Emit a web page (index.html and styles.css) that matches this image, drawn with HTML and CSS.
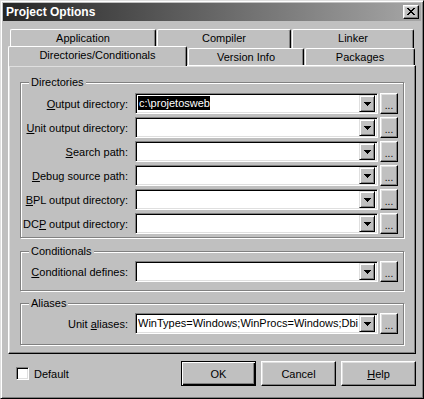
FILE: index.html
```html
<!DOCTYPE html>
<html lang="en">
<head>
    <meta charset="UTF-8">
    <title>Project Options</title>
    <link rel="stylesheet" href="styles.css">
</head>
<body>
    <div class="window">
        <div class="titlebar">
            <span class="title">Project Options</span>
            <button class="close-btn" type="button">
                <svg width="8" height="7" viewBox="0 0 8 7" shape-rendering="crispEdges">
                    <path d="M0 0h2v1H0zM6 0h2v1H6zM1 1h2v1H1zM5 1h2v1H5zM2 2h4v1H2zM3 3h2v1H3zM2 4h4v1H2zM1 5h2v1H1zM5 5h2v1H5zM0 6h2v1H0zM6 6h2v1H6z" fill="#000"/>
                </svg>
            </button>
        </div>

        <div class="tabs">
            <div class="tab-row tab-row-back">
                <div class="tab tab-application">Application</div>
                <div class="tab tab-compiler">Compiler</div>
                <div class="tab tab-linker">Linker</div>
            </div>
            <div class="tab-row tab-row-front">
                <div class="tab tab-selected tab-directories">Directories/Conditionals</div>
                <div class="tab tab-version">Version Info</div>
                <div class="tab tab-packages">Packages</div>
            </div>

            <div class="tab-page">
                <!-- Directories -->
                <div class="group group-directories">
                    <div class="group-title">Directories</div>
                    <div class="field-list">
                        <div class="field">
                            <label class="field-label"><u>O</u>utput directory:</label>
                            <div class="combo">
                                <span class="combo-text"><span class="selected-text">c:\projetosweb</span></span>
                                <span class="combo-arrow"><svg width="7" height="4" viewBox="0 0 7 4" shape-rendering="crispEdges"><path d="M0 0h7v1H0zM1 1h5v1H1zM2 2h3v1H2zM3 3h1v1H3z" fill="#000"/></svg></span>
                            </div>
                            <button class="ellipsis-btn" type="button">...</button>
                        </div>
                        <div class="field">
                            <label class="field-label"><u>U</u>nit output directory:</label>
                            <div class="combo">
                                <span class="combo-text"></span>
                                <span class="combo-arrow"><svg width="7" height="4" viewBox="0 0 7 4" shape-rendering="crispEdges"><path d="M0 0h7v1H0zM1 1h5v1H1zM2 2h3v1H2zM3 3h1v1H3z" fill="#000"/></svg></span>
                            </div>
                            <button class="ellipsis-btn" type="button">...</button>
                        </div>
                        <div class="field">
                            <label class="field-label"><u>S</u>earch path:</label>
                            <div class="combo">
                                <span class="combo-text"></span>
                                <span class="combo-arrow"><svg width="7" height="4" viewBox="0 0 7 4" shape-rendering="crispEdges"><path d="M0 0h7v1H0zM1 1h5v1H1zM2 2h3v1H2zM3 3h1v1H3z" fill="#000"/></svg></span>
                            </div>
                            <button class="ellipsis-btn" type="button">...</button>
                        </div>
                        <div class="field">
                            <label class="field-label"><u>D</u>ebug source path:</label>
                            <div class="combo">
                                <span class="combo-text"></span>
                                <span class="combo-arrow"><svg width="7" height="4" viewBox="0 0 7 4" shape-rendering="crispEdges"><path d="M0 0h7v1H0zM1 1h5v1H1zM2 2h3v1H2zM3 3h1v1H3z" fill="#000"/></svg></span>
                            </div>
                            <button class="ellipsis-btn" type="button">...</button>
                        </div>
                        <div class="field">
                            <label class="field-label"><u>B</u>PL output directory:</label>
                            <div class="combo">
                                <span class="combo-text"></span>
                                <span class="combo-arrow"><svg width="7" height="4" viewBox="0 0 7 4" shape-rendering="crispEdges"><path d="M0 0h7v1H0zM1 1h5v1H1zM2 2h3v1H2zM3 3h1v1H3z" fill="#000"/></svg></span>
                            </div>
                            <button class="ellipsis-btn" type="button">...</button>
                        </div>
                        <div class="field">
                            <label class="field-label">DC<u>P</u> output directory:</label>
                            <div class="combo">
                                <span class="combo-text"></span>
                                <span class="combo-arrow"><svg width="7" height="4" viewBox="0 0 7 4" shape-rendering="crispEdges"><path d="M0 0h7v1H0zM1 1h5v1H1zM2 2h3v1H2zM3 3h1v1H3z" fill="#000"/></svg></span>
                            </div>
                            <button class="ellipsis-btn" type="button">...</button>
                        </div>
                    </div>
                </div>

                <!-- Conditionals -->
                <div class="group group-conditionals">
                    <div class="group-title">Conditionals</div>
                    <div class="field-list">
                        <div class="field">
                            <label class="field-label"><u>C</u>onditional defines:</label>
                            <div class="combo">
                                <span class="combo-text"></span>
                                <span class="combo-arrow"><svg width="7" height="4" viewBox="0 0 7 4" shape-rendering="crispEdges"><path d="M0 0h7v1H0zM1 1h5v1H1zM2 2h3v1H2zM3 3h1v1H3z" fill="#000"/></svg></span>
                            </div>
                            <button class="ellipsis-btn" type="button">...</button>
                        </div>
                    </div>
                </div>

                <!-- Aliases -->
                <div class="group group-aliases">
                    <div class="group-title">Aliases</div>
                    <div class="field-list">
                        <div class="field">
                            <label class="field-label">Unit <u>a</u>liases:</label>
                            <div class="combo">
                                <span class="combo-text">WinTypes=Windows;WinProcs=Windows;Dbi</span>
                                <span class="combo-arrow"><svg width="7" height="4" viewBox="0 0 7 4" shape-rendering="crispEdges"><path d="M0 0h7v1H0zM1 1h5v1H1zM2 2h3v1H2zM3 3h1v1H3z" fill="#000"/></svg></span>
                            </div>
                            <button class="ellipsis-btn" type="button">...</button>
                        </div>
                    </div>
                </div>
            </div>
        </div>

        <div class="footer">
            <label class="checkbox-label">
                <span class="checkbox"></span>
                Default
            </label>
            <div class="buttons">
                <button class="btn btn-default" type="button">OK</button>
                <button class="btn" type="button">Cancel</button>
                <button class="btn" type="button"><u>H</u>elp</button>
            </div>
        </div>
    </div>
</body>
</html>
```

FILE: styles.css
```css
body{
    margin: 0;
    background-color: #c0c0c0;
    font-family: "Liberation Sans", Arial, sans-serif;
    font-size: 11px;
    color: #000;
}

button{
    font-family: inherit;
    font-size: inherit;
    color: inherit;
    padding: 0;
    margin: 0;
}

.window{
    width: 424px;
    height: 399px;
    box-sizing: border-box;
    border: 1px solid;
    border-color: #dfdfdf #000 #000 #dfdfdf;
    box-shadow: inset 1px 1px #fff, inset -1px -1px #808080;
    padding: 2px;
    background-color: #c0c0c0;
}

/* title bar */
.titlebar{
    height: 18px;
    display: flex;
    align-items: center;
    justify-content: space-between;
    padding: 0 2px 0 3px;
    background-image: linear-gradient(to right, #262626, #a6a6a6);
}
.title{
    color: #fff;
    font-weight: bold;
    font-size: 12px;
}
.close-btn{
    width: 16px;
    height: 14px;
    box-sizing: border-box;
    border: 1px solid;
    border-color: #fff #000 #000 #fff;
    box-shadow: inset -1px -1px #808080, inset 1px 1px #dfdfdf;
    background-color: #c0c0c0;
    display: flex;
    align-items: center;
    justify-content: center;
    padding: 0 1px 1px 0;
}
.close-btn svg{
    display: block;
}

/* tabs */
.tabs{
    margin: 8px 5px 0;
}
.tab-row{
    display: flex;
    padding-left: 2px;
}
.tab-row-back{
    height: 19px;
}
.tab-row-front{
    height: 17px;
}
.tab{
    box-sizing: border-box;
    border-left: 1px solid #fff;
    border-top: 1px solid #fff;
    border-right: 1px solid #000;
    border-radius: 2px 2px 0 0;
    box-shadow: inset -1px 0 #808080;
    text-align: center;
    line-height: 14px;
    white-space: nowrap;
}
.tab-row-back .tab{
    padding-top: 1px;
    height: 19px;
}
.tab-row-front .tab{
    padding-top: 1px;
    height: 17px;
}
.tab + .tab{
    margin-left: 1px;
}
.tab-application{ width: 146px; }
.tab-compiler{ width: 134px; }
.tab-linker{ width: 122px; }
.tab-directories{ width: 179px; }
.tab-version{ width: 116px; }
.tab-packages{ width: 110px; }

.tab-row-front .tab-selected{
    position: relative;
    z-index: 1;
    height: 20px;
    margin-top: -2px;
    margin-left: -2px;
    background-color: #c0c0c0;
}

.tab-page{
    border: 1px solid;
    border-color: #fff #000 #000 #fff;
    box-shadow: inset -1px -1px #808080, inset 1px 1px #dfdfdf;
    padding: 16px 11px 8px;
}

/* group boxes */
.group{
    border: 1px solid #808080;
    box-shadow: 1px 1px 0 #fff, inset 1px 1px 0 #fff;
}
.group-title{
    display: table;
    margin: -7px 0 0 8px;
    padding: 0 2px;
    line-height: 13px;
    background-color: #c0c0c0;
}
.group-directories{
    padding-bottom: 3px;
}
.group-directories .field-list{
    margin-top: 4px;
}
.group-conditionals{
    margin-top: 13px;
    padding-bottom: 8px;
}
.group-aliases{
    margin-top: 12px;
    padding-bottom: 10px;
}
.group-conditionals .field-list,
.group-aliases .field-list{
    margin-top: 3px;
}

.field-list{
    display: flex;
    flex-direction: column;
    gap: 3px;
}
.field{
    display: flex;
    align-items: center;
    height: 21px;
}
.field-label{
    flex: 0 0 114px;
    box-sizing: border-box;
    padding-right: 7px;
    text-align: right;
    white-space: nowrap;
}

/* combo box */
.combo{
    flex: 0 0 243px;
    height: 21px;
    box-sizing: border-box;
    border: 1px solid;
    border-color: #808080 #fff #fff #808080;
    box-shadow: inset 1px 1px #000, inset -1px -1px #dfdfdf;
    background-color: #fff;
    padding: 2px;
    display: flex;
    align-items: stretch;
}
.combo-text{
    flex: 1;
    min-width: 0;
    overflow: hidden;
    white-space: nowrap;
    line-height: 15px;
}
.selected-text{
    background-color: #000;
    color: #fff;
    padding: 1px 0 1px 1px;
}
.combo-arrow{
    flex: 0 0 16px;
    box-sizing: border-box;
    border: 1px solid;
    border-color: #dfdfdf #000 #000 #dfdfdf;
    box-shadow: inset 1px 1px #fff, inset -1px -1px #808080;
    background-color: #c0c0c0;
    display: flex;
    align-items: center;
    justify-content: center;
    margin: -1px 0;
}
.combo-arrow svg{
    display: block;
}

.ellipsis-btn{
    flex: 0 0 18px;
    height: 21px;
    margin-left: 2px;
    box-sizing: border-box;
    border: 1px solid;
    border-color: #fff #000 #000 #fff;
    box-shadow: inset -1px -1px #808080, inset 1px 1px #dfdfdf;
    background-color: #c0c0c0;
    line-height: 14px;
    padding-top: 4px;
    font-size: 10px;
}

/* footer */
.footer{
    display: flex;
    align-items: center;
    justify-content: space-between;
    margin-top: 7px;
    padding: 0 5px 0 13px;
}
.checkbox-label{
    display: flex;
    align-items: center;
    gap: 5px;
}
.checkbox{
    width: 13px;
    height: 13px;
    box-sizing: border-box;
    border: 1px solid;
    border-color: #808080 #fff #fff #808080;
    box-shadow: inset 1px 1px #000, inset -1px -1px #dfdfdf;
    background-color: #fff;
}
.buttons{
    display: flex;
    gap: 5px;
}
.btn{
    width: 75px;
    height: 25px;
    box-sizing: border-box;
    border: 1px solid;
    border-color: #fff #000 #000 #fff;
    box-shadow: inset -1px -1px #808080, inset 1px 1px #dfdfdf;
    background-color: #c0c0c0;
}
.btn-default{
    border-color: #000;
    box-shadow: inset 1px 1px #fff, inset -1px -1px #000, inset -2px -2px #808080;
}
```
